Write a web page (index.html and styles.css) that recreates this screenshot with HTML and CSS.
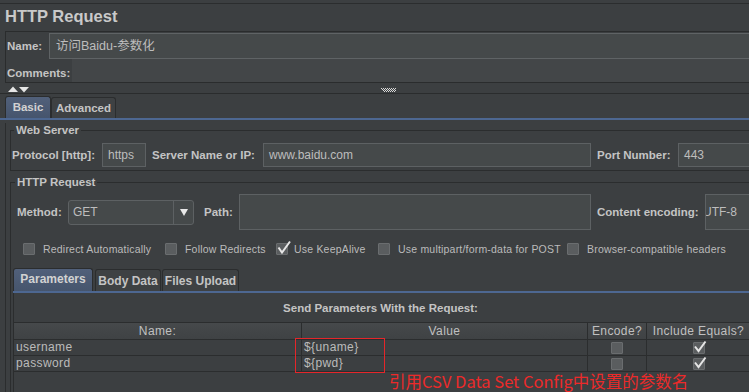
FILE: index.html
```html
<!DOCTYPE html>
<html>
<head>
<meta charset="utf-8">
<link rel="stylesheet" href="styles.css">
</head>
<body>
<div class="page">
  <div class="title">HTTP Request</div>
  <div class="namebox">
    <div class="name-row">
      <span class="lbl name-lbl">Name:</span>
      <div class="input name-input">访问Baidu-参数化</div>
    </div>
    <div class="comments-row">
      <span class="lbl comments-lbl">Comments:</span>
      <div class="comments-area"></div>
    </div>
  </div>
  <div class="divider">
    <svg class="arrows" width="24" height="7" viewBox="0 0 24 7"><path d="M1 6 L6 0.5 L11 6 Z" fill="#e6e6e6"/><path d="M12 1 L22 1 L17 6.5 Z" fill="#e6e6e6"/></svg>
    <svg class="grip" width="16" height="5" viewBox="0 0 16 5">
      <g fill="#d8d8d8">
        <rect x="0" y="0" width="1" height="1"/><rect x="2" y="0" width="1" height="1"/><rect x="4" y="0" width="1" height="1"/><rect x="6" y="0" width="1" height="1"/><rect x="8" y="0" width="1" height="1"/><rect x="10" y="0" width="1" height="1"/><rect x="12" y="0" width="1" height="1"/><rect x="14" y="0" width="1" height="1"/>
        <rect x="1" y="1" width="1" height="1"/><rect x="3" y="1" width="1" height="1"/><rect x="5" y="1" width="1" height="1"/><rect x="7" y="1" width="1" height="1"/><rect x="9" y="1" width="1" height="1"/><rect x="11" y="1" width="1" height="1"/><rect x="13" y="1" width="1" height="1"/>
        <rect x="2" y="2" width="1" height="1"/><rect x="4" y="2" width="1" height="1"/><rect x="6" y="2" width="1" height="1"/><rect x="8" y="2" width="1" height="1"/><rect x="10" y="2" width="1" height="1"/><rect x="12" y="2" width="1" height="1"/><rect x="14" y="2" width="1" height="1"/>
        <rect x="3" y="3" width="1" height="1"/><rect x="5" y="3" width="1" height="1"/><rect x="7" y="3" width="1" height="1"/><rect x="9" y="3" width="1" height="1"/><rect x="11" y="3" width="1" height="1"/><rect x="13" y="3" width="1" height="1"/>
      </g>
    </svg>
  </div>
  <div class="tabs main-tabs">
    <div class="tab active tab-basic">Basic</div>
    <div class="tab tab-adv">Advanced</div>
  </div>
  <div class="tab-body">
    <fieldset class="group web-server">
      <legend>Web Server</legend>
      <div class="row ws-row">
        <span class="lbl protocol-lbl">Protocol [http]:</span>
        <div class="input protocol-input">https</div>
        <span class="lbl server-lbl">Server Name or IP:</span>
        <div class="input server-input">www.baidu.com</div>
        <span class="lbl port-lbl">Port Number:</span>
        <div class="input port-input">443</div>
      </div>
    </fieldset>
    <fieldset class="group http-req">
      <legend>HTTP Request</legend>
      <div class="row method-row">
        <span class="lbl method-lbl">Method:</span>
        <div class="select">
          <span class="select-text">GET</span>
          <span class="select-btn"><svg width="8" height="7" viewBox="0 0 8 7"><path d="M0 0 L8 0 L4 7 Z" fill="#e8e8e8"/></svg></span>
        </div>
        <span class="lbl path-lbl">Path:</span>
        <div class="input path-input"></div>
        <span class="lbl enc-lbl">Content encoding:</span>
        <div class="input enc-input"><span class="enc-text">UTF-8</span></div>
      </div>
      <div class="row checks-row">
        <span class="cb"></span><span class="cb-lbl w-redirect">Redirect Automatically</span>
        <span class="cb"></span><span class="cb-lbl w-follow">Follow Redirects</span>
        <span class="cb checked"><svg width="16" height="16" viewBox="0 0 16 16"><path d="M2.5 7.5 L6 12.5 L14 1.5" fill="none" stroke="#e6e6e6" stroke-width="2"/></svg></span><span class="cb-lbl w-keep">Use KeepAlive</span>
        <span class="cb"></span><span class="cb-lbl w-multi">Use multipart/form-data for POST</span>
        <span class="cb"></span><span class="cb-lbl">Browser-compatible headers</span>
      </div>
      <div class="tabs param-tabs">
        <div class="tab active tab-params">Parameters</div>
        <div class="tab tab-body-data">Body Data</div>
        <div class="tab tab-files">Files Upload</div>
      </div>
      <div class="param-panel">
        <div class="send-title">Send Parameters With the Request:</div>
        <div class="table">
          <div class="thead">
            <div class="th c-name">Name:</div>
            <div class="th c-value">Value</div>
            <div class="th c-enc">Encode?</div>
            <div class="th c-inc">Include Equals?</div>
          </div>
          <div class="tr">
            <div class="td c-name">username</div>
            <div class="td c-value">${uname}</div>
            <div class="td c-enc center"><span class="cb small"></span></div>
            <div class="td c-inc center"><span class="cb small checked"><svg width="14" height="14" viewBox="0 0 14 14"><path d="M2 6.5 L5.5 11 L12.5 1.5" fill="none" stroke="#e6e6e6" stroke-width="2"/></svg></span></div>
          </div>
          <div class="tr">
            <div class="td c-name">password</div>
            <div class="td c-value">${pwd}</div>
            <div class="td c-enc center"><span class="cb small"></span></div>
            <div class="td c-inc center"><span class="cb small checked"><svg width="14" height="14" viewBox="0 0 14 14"><path d="M2 6.5 L5.5 11 L12.5 1.5" fill="none" stroke="#e6e6e6" stroke-width="2"/></svg></span></div>
          </div>
          <div class="annotation-box"></div>
          <div class="annotation">引用CSV Data Set Config中设置的参数名</div>
        </div>
      </div>
    </fieldset>
  </div>
</div>
</body>
</html>
```

FILE: styles.css
```css
* { box-sizing: border-box; }
html, body {
  margin: 0;
  padding: 0;
  background: #3c3f41;
  width: 749px;
  height: 392px;
  overflow: hidden;
}
body {
  font-family: "Liberation Sans", "Noto Sans CJK SC", sans-serif;
  color: #bbbbbb;
}
.page {
  width: 770px;
}
.title {
  margin-top: 3px;
  border-top: 1px solid #2b2d2e;
  height: 28px;
  padding-left: 5px;
  font-size: 16.5px;
  font-weight: bold;
  line-height: 25px;
  color: #c9c9c9;
}
.lbl {
  font-weight: bold;
  font-size: 11.5px;
  color: #c4c4c4;
  white-space: nowrap;
}
.input {
  background: #45494a;
  border: 1px solid #5d6163;
  color: #bdbdbd;
  font-size: 12px;
  white-space: nowrap;
  overflow: hidden;
}
.namebox {
  margin-left: 5px;
  border: 1px solid #2a2c2d;
  height: 52px;
  display: flex;
  flex-direction: column;
}
.name-row {
  display: flex;
  align-items: center;
  height: 27px;
  padding-top: 1px;
}
.name-lbl {
  width: 43px;
  padding-left: 1px;
}
.name-input {
  flex: 1;
  height: 26px;
  line-height: 24px;
  padding-left: 6px;
  font-size: 12.5px;
  border-color: #5f6365;
}
.comments-row {
  display: flex;
  align-items: center;
  flex: 1;
}
.comments-lbl {
  width: 66px;
  padding-left: 1px;
  padding-top: 5px;
}
.comments-area {
  flex: 1;
  align-self: stretch;
  background: #434648;
}
.divider {
  height: 11px;
  border-bottom: 1px solid #2a2c2d;
  display: flex;
  align-items: center;
  padding-left: 7px;
}
.arrows { display: block; margin-top: 2px; }
.grip { display: block; margin-left: 350px; margin-top: 5px; }
.tabs {
  display: flex;
  align-items: flex-end;
  border-bottom: 2px solid #4d6791;
}
.main-tabs {
  margin-top: 2px;
  height: 24px;
  padding-left: 5px;
}
.tab {
  border: 1px solid #2b2d2e;
  border-bottom: none;
  border-radius: 3px 3px 0 0;
  font-weight: bold;
  font-size: 11.5px;
  color: #c4c4c4;
  background: #3e4143;
  padding: 0 5px;
}
.tab.active {
  background: linear-gradient(#51607a, #46556d);
  color: #d2d2d2;
}
.tab-basic { height: 22px; line-height: 20px; width: 46px; text-align: center; padding: 0; }
.tab-adv { height: 21px; line-height: 21px; width: 65px; text-align: center; padding: 0; }
.tab-body {
  margin-left: 5px;
  border-left: 1px solid #2b2d2e;
  padding-left: 4px;
}
.group {
  margin: 0;
  padding: 0;
  border: 1px solid #2b2d2e;
  border-right: none;
  min-width: 0;
}
.group legend {
  font-weight: bold;
  font-size: 11.5px;
  line-height: 14px;
  padding: 0 2px;
  margin-left: 2px;
  color: #c4c4c4;
}
.web-server {
  margin-top: 3px;
  padding: 6px 0 3px 1px;
}
.row {
  display: flex;
  align-items: center;
}
.row > * { flex: none; }
.ws-row { height: 24px; }
.protocol-lbl { width: 90px; }
.protocol-input { width: 44px; height: 24px; line-height: 22px; padding-left: 5px; }
.server-lbl { margin-left: 6px; width: 111px; }
.server-input { width: 328px; height: 24px; line-height: 22px; padding-left: 5px; }
.port-lbl { margin-left: 6px; width: 81px; }
.port-input { width: 80px; height: 24px; line-height: 22px; padding-left: 5px; }
.http-req {
  margin-top: 4px;
  padding: 5px 0 0 2px;
  border-bottom: none;
}
.method-row { height: 36px; }
.method-lbl { margin-left: 4px; width: 51px; }
.select {
  width: 126px;
  height: 25px;
  display: flex;
  background: #45494a;
  border: 1px solid #5d6163;
  border-radius: 3px;
  font-size: 12px;
  color: #bdbdbd;
}
.select-text { flex: 1; padding-left: 4px; line-height: 22px; }
.select-btn {
  width: 20px;
  border-left: 1px solid #5d6163;
  display: flex;
  align-items: center;
  justify-content: center;
}
.path-lbl { margin-left: 10px; width: 35px; }
.path-input { width: 352px; height: 36px; }
.enc-lbl { margin-left: 6px; width: 108px; }
.enc-input {
  width: 60px;
  height: 36px;
  line-height: 34px;
  text-indent: -3px;
}
.checks-row {
  margin-top: 12px;
  height: 13px;
  padding-left: 10px;
}
.cb {
  width: 12px;
  height: 12px;
  background: #5a5d5f;
  border: 1px solid #6a6d6f;
  border-radius: 1px;
  flex: none;
  position: relative;
}
.cb.checked svg {
  position: absolute;
  left: -1px;
  top: -4px;
}
.cb-lbl {
  font-size: 10.5px;
  letter-spacing: 0.2px;
  color: #bbbbbb;
  margin-left: 8px;
  margin-right: 13px;
  white-space: nowrap;
}
.w-redirect { width: 109px; }
.w-follow { width: 78px; }
.w-keep { width: 69px; margin-left: 6px; margin-right: 15px; }
.w-multi { width: 156px; }
.param-tabs {
  margin-top: 14px;
  height: 24px;
  padding-left: 0;
  margin-left: 0;
}
.tab-params { height: 23px; line-height: 20px; width: 80px; text-align: center; padding: 0; font-size: 12px; }
.tab-body-data { height: 22px; line-height: 23px; width: 66px; text-align: center; padding: 0; font-size: 12px; margin-left: 2px; }
.tab-files { height: 22px; line-height: 23px; width: 77px; text-align: center; padding: 0; font-size: 12px; margin-left: 1px; }
.param-panel {
  border-left: 1px solid #2b2d2e;
  height: 110px;
}
.send-title {
  text-align: center;
  font-weight: bold;
  font-size: 11.5px;
  color: #c4c4c4;
  height: 29px;
  line-height: 31px;
  width: 747px;
  padding-right: 14px;
}
.table {
  position: relative;
  font-size: 12px;
  letter-spacing: 0.4px;
}
.thead, .tr {
  display: flex;
}
.thead {
  height: 18px;
  background: linear-gradient(#46494b, #3f4244);
  border-top: 1px solid #2b2d2e;
  border-bottom: 1px solid #2b2d2e;
}
.th {
  text-align: center;
  line-height: 16px;
  color: #c0c0c0;
  border-right: 1px solid #2b2d2e;
  flex: none;
}
.tr {
  height: 16px;
  border-bottom: 1px solid #2b2d2e;
}
.td {
  line-height: 15px;
  padding-left: 2px;
  border-right: 1px solid #2b2d2e;
  white-space: nowrap;
  flex: none;
}
.td.center {
  display: flex;
  align-items: center;
  justify-content: center;
  padding-left: 0;
}
.c-name { width: 288px; }
.c-value { width: 286px; }
.c-enc { width: 59px; }
.c-inc { width: 104px; }
.cb.small {
  width: 12px;
  height: 12px;
}
.cb.small.checked svg {
  left: -1px;
  top: -3px;
}
.annotation-box {
  position: absolute;
  left: 281px;
  top: 16px;
  width: 90px;
  height: 35px;
  border: 1.5px solid #e5262a;
}
.annotation {
  position: absolute;
  left: 375px;
  top: 48px;
  font-family: "Noto Sans CJK SC", sans-serif;
  font-size: 16.5px;
  letter-spacing: 0;
  color: #ec2a2a;
  line-height: 22px;
  white-space: nowrap;
}
```
